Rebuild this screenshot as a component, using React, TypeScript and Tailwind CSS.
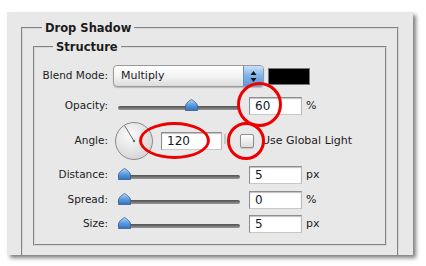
import React from 'react';

const Slider = ({ pos }: { pos: number }) => (
  <div className="relative ml-[10px] h-[14px] w-[122px]">
    <div className="absolute left-0 right-0 top-[7px] h-[4px] rounded-full bg-gradient-to-b from-[#4f4f4f] to-[#999999]" />
    <svg className="absolute top-0" style={{ left: pos }} width="13" height="12" viewBox="0 0 13 12">
      <defs>
        <linearGradient id={`thumb${pos}`} x1="0" y1="0" x2="0" y2="1">
          <stop offset="0" stopColor="#b8d6f5" />
          <stop offset="0.5" stopColor="#5e9de0" />
          <stop offset="1" stopColor="#2f6fc0" />
        </linearGradient>
      </defs>
      <path d="M6.5 0.5 C8.5 1.5 12.5 4.5 12.5 7 L12.5 11.5 L0.5 11.5 L0.5 7 C0.5 4.5 4.5 1.5 6.5 0.5 Z" fill={`url(#thumb${pos})`} stroke="#3a5f8f" strokeWidth="0.8" />
    </svg>
  </div>
);

const Field = ({ value, width = 'w-[53px]' }: { value: string; width?: string }) => (
  <div className={`${width} h-[18px] bg-white border border-[#8e8e8e] border-b-[#c8c8c8] border-r-[#b8b8b8] shadow-[inset_0_1px_1px_rgba(0,0,0,0.25)] pl-[5px] text-[12px] leading-[16px] text-[#14182a]`}>
    {value}
  </div>
);

const Label = ({ children }: { children: React.ReactNode }) => (
  <div className="w-[73px] text-right text-[10.5px] text-[#1c1c1c] whitespace-nowrap">{children}</div>
);

export default function App() {
  return (
    <div className="relative w-[426px] h-[266px] overflow-hidden bg-white pl-[7px] pt-[12px] font-['Lucida_Grande','DejaVu_Sans',sans-serif]">
      <div className="w-[406px] h-[243px] overflow-hidden bg-[#e8e8e8] shadow-[3px_3px_4px_rgba(0,0,0,0.5)]">
        <fieldset className="mx-[14px] mt-[9px] px-[10px] pt-[5px] pb-[40px] border-2 [border-style:groove] border-[#d8d8d8]">
          <legend className="ml-[9px] px-[3px] text-[11.5px] font-bold leading-[14px] text-[#1c1c1c]">Drop Shadow</legend>
          <fieldset className="pt-[11px] pb-[11px] border-2 [border-style:groove] border-[#d8d8d8]">
            <legend className="ml-[18px] px-[3px] text-[11.5px] font-bold leading-[14px] text-[#1c1c1c]">Structure</legend>

            <div className="flex items-center h-[22px]">
              <Label>Blend Mode:</Label>
              <div className="ml-[5px] flex h-[22px] w-[151px] overflow-hidden rounded-[4px] border border-[#9a9a9a] bg-gradient-to-b from-white via-[#f4f4f4] to-[#dcdcdc] shadow-[0_1px_1px_rgba(0,0,0,0.2)]">
                <div className="flex-1 pl-[7px] text-[11px] leading-[20px] text-[#1c1c1c]">Multiply</div>
                <div className="flex w-[20px] flex-col items-center justify-center border-l border-[#6d8fb8] bg-gradient-to-b from-[#c9e0f7] via-[#7fb2e8] to-[#5d98dc]">
                  <svg width="7" height="13" viewBox="0 0 7 13">
                    <path d="M3.5 1 L6.5 5 L0.5 5 Z" fill="#111" />
                    <path d="M3.5 12 L6.5 8 L0.5 8 Z" fill="#111" />
                  </svg>
                </div>
              </div>
              <div className="ml-[4px] h-[17px] w-[42px] border border-[#777] bg-black" />
            </div>

            <div className="mt-[10px] flex items-center h-[18px]">
              <Label>Opacity:</Label>
              <Slider pos={67} />
              <div className="ml-[9px]"><Field value="60" /></div>
              <div className="ml-[4px] text-[11px] text-[#1c1c1c]">%</div>
            </div>

            <div className="mt-[6px] flex items-center h-[40px]">
              <Label>Angle:</Label>
              <svg className="ml-[6px]" width="40" height="40" viewBox="0 0 40 40">
                <defs>
                  <radialGradient id="dial" cx="0.4" cy="0.35" r="0.7">
                    <stop offset="0" stopColor="#fbfbfb" />
                    <stop offset="1" stopColor="#d4d4d4" />
                  </radialGradient>
                </defs>
                <circle cx="20" cy="20" r="18.5" fill="url(#dial)" stroke="#8a8a8a" strokeWidth="1" />
                <line x1="20" y1="20" x2="10.5" y2="4.5" stroke="#6a6a6a" strokeWidth="1" />
                <circle cx="20" cy="20" r="1.2" fill="#6a6a6a" />
              </svg>
              <div className="ml-[7px]"><Field value="120" width="w-[61px]" /></div>
              <div className="ml-[2px] h-[10px] w-[2px] self-start mt-[13px] bg-[#c8c8c8]" />
              <div className="ml-[14px] h-[14px] w-[14px] rounded-[2px] border border-[#8e8e8e] bg-gradient-to-b from-white to-[#dcdcdc] shadow-[0_1px_1px_rgba(0,0,0,0.15)]" />
              <div className="ml-[8px] text-[11px] text-[#1c1c1c] whitespace-nowrap">Use Global Light</div>
            </div>

            <div className="mt-[5px] flex items-center h-[18px]">
              <Label>Distance:</Label>
              <Slider pos={0} />
              <div className="ml-[9px]"><Field value="5" /></div>
              <div className="ml-[4px] text-[11px] text-[#1c1c1c]">px</div>
            </div>

            <div className="mt-[7px] flex items-center h-[18px]">
              <Label>Spread:</Label>
              <Slider pos={0} />
              <div className="ml-[9px]"><Field value="0" /></div>
              <div className="ml-[4px] text-[11px] text-[#1c1c1c]">%</div>
            </div>

            <div className="mt-[6px] flex items-center h-[18px]">
              <Label>Size:</Label>
              <Slider pos={0} />
              <div className="ml-[9px]"><Field value="5" /></div>
              <div className="ml-[4px] text-[11px] text-[#1c1c1c]">px</div>
            </div>
          </fieldset>
        </fieldset>
      </div>

      {/* red annotation marks */}
      <div className="absolute left-[237px] top-[82px] h-[45px] w-[45px] rounded-full border-[3px] border-[#ee0000]" />
      <div className="absolute left-[139px] top-[122px] h-[37px] w-[71px] rounded-[50%] border-[3px] border-[#ee0000]" />
      <div className="absolute left-[227px] top-[122px] h-[38px] w-[38px] rounded-full border-[3px] border-[#ee0000]" />
    </div>
  );
}
